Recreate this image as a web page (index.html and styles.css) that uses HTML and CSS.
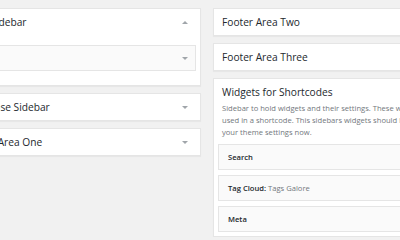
FILE: index.html
```html
<!DOCTYPE html>
<html lang="en">
<head>
  <meta charset="UTF-8" />
  <title>Widgets</title>
  <link rel="stylesheet" href="styles.css">
</head>
<body>

  <div class="widgets">

    <!-- left column -->
    <div class="column">
      <div class="sidebar">
        <div class="sidebar-head">
          <h2>Main Sidebar</h2>
          <span class="toggle up"></span>
        </div>
        <div class="widget-list main-list">
          <div class="widget">
            <h3>Search</h3>
            <span class="toggle"></span>
          </div>
        </div>
      </div>

      <div class="sidebar">
        <div class="sidebar-head">
          <h2>Showcase Sidebar</h2>
          <span class="toggle"></span>
        </div>
      </div>

      <div class="sidebar">
        <div class="sidebar-head">
          <h2>Footer Area One</h2>
          <span class="toggle"></span>
        </div>
      </div>
    </div>

    <!-- right column -->
    <div class="column">
      <div class="sidebar">
        <div class="sidebar-head">
          <h2>Footer Area Two</h2>
          <span class="toggle"></span>
        </div>
      </div>

      <div class="sidebar">
        <div class="sidebar-head">
          <h2>Footer Area Three</h2>
          <span class="toggle"></span>
        </div>
      </div>

      <div class="sidebar">
        <div class="sidebar-head">
          <h2>Widgets for Shortcodes</h2>
          <span class="toggle up"></span>
        </div>
        <p class="sidebar-description">Sidebar to hold widgets and their settings. These widgets will be used in a shortcode. This sidebars widgets should be saved to your theme settings now.</p>
        <div class="widget-list">
          <div class="widget">
            <h3>Search</h3>
            <span class="toggle"></span>
          </div>
          <div class="widget">
            <h3>Tag Cloud: <span class="in-widget-title">Tags Galore</span></h3>
            <span class="toggle"></span>
          </div>
          <div class="widget">
            <h3>Meta</h3>
            <span class="toggle"></span>
          </div>
        </div>
      </div>
    </div>

  </div>

</body>
</html>
```

FILE: styles.css
```css
:root {
  --bg-page: #f1f1f1;
  --bg-box: #fff;
  --bg-widget: #fafafa;
  --border: #e5e5e5;
  --text: #23282d;
  --text-muted: #72777c;
  --arrow: #a0a5aa;
}
* {
  box-sizing: border-box;
}
body {
  margin: 0;
  background-color: var(--bg-page);
  color: var(--text);
  font-family: 'Open Sans', 'Liberation Sans', sans-serif;
  overflow: hidden;
}
.widgets {
  display: flex;
  gap: 12px;
  margin-left: -45px;   /* screenshot is cropped on the left */
  padding-top: 8px;
}
.column {
  flex: none;
  width: 246px;
  display: flex;
  flex-direction: column;
  gap: 7px;
}
.sidebar {
  background-color: var(--bg-box);
  border: 1px solid var(--border);
  box-shadow: 0 1px 1px rgba(0,0,0,0.04);
}
.sidebar-head {
  display: flex;
  align-items: center;
  justify-content: space-between;
  height: 26px;
  padding: 0 12px 0 8px;
}
.sidebar-head h2 {
  margin: 0;
  font-size: 10.2px;
  font-weight: 400;
  line-height: 14px;
  white-space: nowrap;
}
.sidebar-description {
  margin: -3px 8px 0;
  font-size: 7.6px;
  line-height: 12px;
  color: var(--text-muted);
}
.widget-list {
  display: flex;
  flex-direction: column;
  gap: 5px;
  padding: 6px 4px 4px;
}
.main-list {
  padding: 10px 4px 14px;
}
.widget {
  display: flex;
  align-items: center;
  justify-content: space-between;
  height: 26px;
  padding: 0 7px 0 9px;
  background-color: var(--bg-widget);
  border: 1px solid var(--border);
}
.widget h3 {
  margin: 0;
  font-size: 7.6px;
  font-weight: 600;
  line-height: 12px;
  white-space: nowrap;
}
.in-widget-title {
  font-weight: 400;
  color: var(--text-muted);
}
.toggle {
  flex: none;
  width: 0;
  height: 0;
  border-left: 3px solid transparent;
  border-right: 3px solid transparent;
  border-top: 3px solid var(--arrow);
}
.toggle.up {
  border-top: none;
  border-bottom: 3px solid var(--arrow);
}
```
